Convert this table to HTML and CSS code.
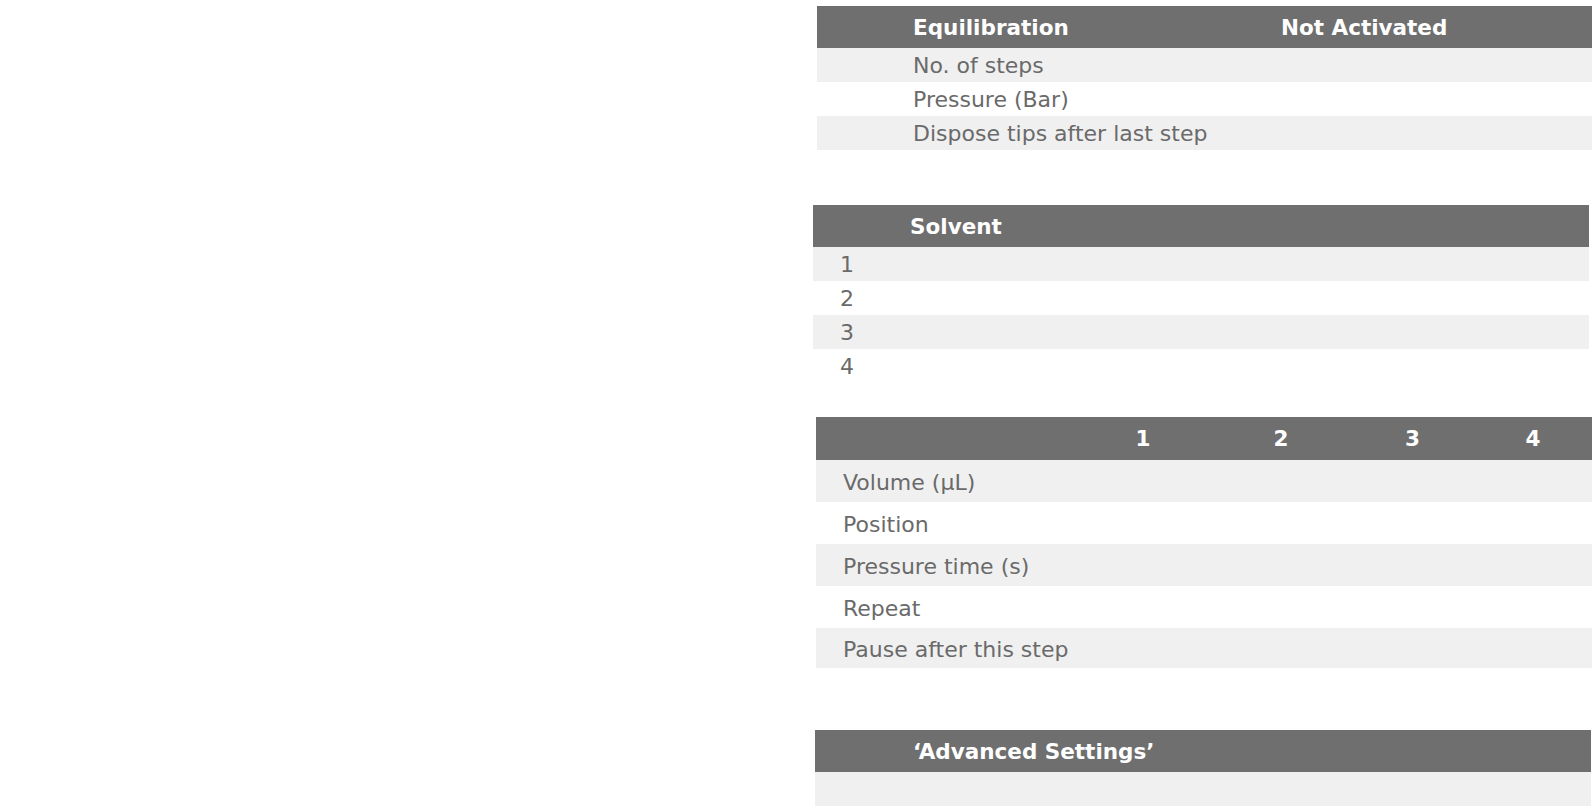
FILE: index.html
```html
<!DOCTYPE html>
<html>
<head>
<meta charset="utf-8">
<link rel="stylesheet" href="styles.css">
</head>
<body>
<div class="page">
  <section class="tbl t1">
    <div class="row head">
      <span class="c-name">Equilibration</span>
      <span class="c-val">Not Activated</span>
    </div>
    <div class="row alt"><span class="c-name">No. of steps</span></div>
    <div class="row"><span class="c-name">Pressure (Bar)</span></div>
    <div class="row alt"><span class="c-name">Dispose tips after last step</span></div>
  </section>

  <section class="tbl t2">
    <div class="row head"><span class="c-name">Solvent</span></div>
    <div class="row alt"><span class="c-idx">1</span></div>
    <div class="row"><span class="c-idx">2</span></div>
    <div class="row alt"><span class="c-idx">3</span></div>
    <div class="row"><span class="c-idx">4</span></div>
  </section>

  <section class="tbl t3">
    <div class="row head grid3">
      <span></span><span class="num">1</span><span class="num">2</span><span class="num">3</span><span class="num">4</span>
    </div>
    <div class="row alt grid3"><span class="lbl">Volume (µL)</span></div>
    <div class="row grid3"><span class="lbl">Position</span></div>
    <div class="row alt grid3"><span class="lbl">Pressure time (s)</span></div>
    <div class="row grid3"><span class="lbl">Repeat</span></div>
    <div class="row alt grid3 last"><span class="lbl">Pause after this step</span></div>
  </section>

  <section class="tbl t4">
    <div class="row head"><span class="c-name">‘Advanced Settings’</span></div>
    <div class="row alt"></div>
  </section>
</div>
</body>
</html>
```

FILE: styles.css
```css
html, body {
  margin: 0;
  padding: 0;
  background: #ffffff;
}

body {
  font-family: "DejaVu Sans", Verdana, sans-serif;
  color: #6a6a6a;
  font-size: 22px;
}

.page {
  display: flex;
  flex-direction: column;
  padding-top: 6px;
}

.tbl {
  display: flex;
  flex-direction: column;
}

.row {
  display: flex;
  align-items: center;
  height: 34px;
  padding-top: 1px;
  box-sizing: border-box;
  background: #ffffff;
}

.row.alt {
  background: #f0f0f0;
}

.row.head {
  height: 42px;
  padding-top: 0;
  background: #6f6f6f;
  color: #ffffff;
  font-weight: bold;
  font-size: 21.5px;
}

.t1 {
  margin-left: 817px;
  width: 775px;
}

.t1 .c-name {
  padding-left: 96px;
  width: 368px;
}

.t2 {
  margin-top: 55px;
  margin-left: 813px;
  width: 776px;
}

.t2 .c-name {
  padding-left: 97px;
}

.t2 .c-idx {
  padding-left: 27px;
}

.t3 {
  margin-top: 34px;
  margin-left: 816px;
  width: 776px;
}

.grid3 {
  display: grid;
  grid-template-columns: 259px 136px 140px 123px 118px;
  align-items: center;
}

.t3 .row {
  height: 42px;
  padding-top: 3px;
}

.t3 .row.head {
  height: 43px;
  padding-top: 0;
}

.t3 .row.last {
  height: 40px;
}

.t3 .lbl {
  padding-left: 27px;
}

.t3 .num {
  text-align: center;
}

.t4 {
  margin-top: 62px;
  margin-left: 815px;
  width: 776px;
}

.t4 .c-name {
  padding-left: 98px;
}
```
